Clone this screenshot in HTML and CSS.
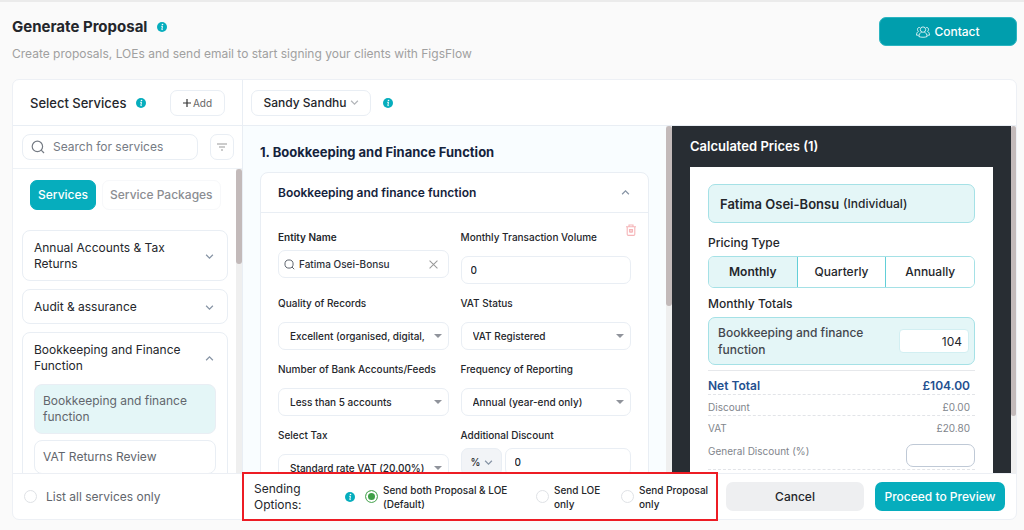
FILE: index.html
```html
<!DOCTYPE html>
<html lang="en">
<head>
    <meta charset="UTF-8">
    <meta name="viewport" content="width=device-width, initial-scale=1.0">
    <title>Generate Proposal</title>
    <link rel="stylesheet" href="styles.css">
</head>
<body>
    <!-- shared icons -->
    <svg class="sprite" aria-hidden="true">
        <symbol id="info" viewBox="0 0 10 10">
            <circle cx="5" cy="5" r="5" fill="#06adbd"/>
            <circle cx="5.5" cy="2.5" r="0.8" fill="#fff"/>
            <path d="M4.2 4.3h1.3L4.8 7.6h.9" fill="none" stroke="#fff" stroke-width="1"/>
        </symbol>
        <symbol id="down" viewBox="0 0 8 8">
            <path d="M1 2.5l3 3 3-3" fill="none" stroke="currentColor" stroke-width="1.1"/>
        </symbol>
        <symbol id="up" viewBox="0 0 8 8">
            <path d="M1 5.5l3-3 3 3" fill="none" stroke="currentColor" stroke-width="1.1"/>
        </symbol>
        <symbol id="search" viewBox="0 0 14 14">
            <circle cx="6.4" cy="6.4" r="5.2" fill="none" stroke="currentColor" stroke-width="1.2"/>
            <path d="M10.2 10.2l2.8 2.8" fill="none" stroke="currentColor" stroke-width="1.2"/>
        </symbol>
    </svg>

    <header class="page-header">
        <div>
            <h1>Generate Proposal <svg class="info"><use href="#info"/></svg></h1>
            <p>Create proposals, LOEs and send email to start signing your clients with FigsFlow</p>
        </div>
        <button class="btn btn-contact" type="button">
            <svg viewBox="0 0 14 12" fill="none" stroke="currentColor" stroke-width="0.8">
                <circle cx="7" cy="3.6" r="2.7"/>
                <path d="M3 10.9c-.3-2.6 1.2-4.3 2.6-4.7M11 10.9c.3-2.6-1.2-4.3-2.6-4.7M3 10.6c2 .9 6 .9 8 0"/>
                <path d="M3.8 1.5C2.2 1.2 1.3 2.4 1.5 3.7c.1.8.5 1.4 1 1.7C1.2 6 .5 7.2.5 9.2h2.2M10.2 1.5c1.6-.3 2.5.9 2.3 2.2-.1.8-.5 1.4-1 1.7 1.3.6 2 1.8 2 3.8h-2.2"/>
            </svg>
            Contact
        </button>
    </header>

    <main class="panel">
        <div class="panel-top">
            <div class="top-services">
                <h2>Select Services</h2>
                <svg class="info"><use href="#info"/></svg>
                <button class="btn-add" type="button">
                    <svg viewBox="0 0 8 8"><path d="M4 0v8M0 4h8" stroke="#333" stroke-width="1.2"/></svg>Add
                </button>
            </div>
            <div class="top-client">
                <button class="btn-client" type="button">Sandy Sandhu <svg class="chevron"><use href="#down"/></svg></button>
                <svg class="info"><use href="#info"/></svg>
            </div>
        </div>

        <div class="panel-body">
            <aside class="sidebar">
                <div class="search-row">
                    <label class="search">
                        <svg><use href="#search"/></svg>
                        <input type="text" placeholder="Search for services" aria-label="Search for services">
                    </label>
                    <button class="btn-filter" type="button" aria-label="Filter">
                        <svg viewBox="0 0 12 8"><path d="M1 1h10M3 4h6M5 7h2" stroke="#999" stroke-width="1.2"/></svg>
                    </button>
                </div>
                <div class="scroll-area">
                    <div class="service-list">
                        <div class="tabs">
                            <button class="tab active" type="button">Services</button>
                            <button class="tab" type="button">Service Packages</button>
                        </div>
                        <section class="service">
                            <button class="service-head" type="button">Annual Accounts &amp; Tax Returns <svg class="chevron"><use href="#down"/></svg></button>
                        </section>
                        <section class="service">
                            <button class="service-head" type="button">Audit &amp; assurance <svg class="chevron"><use href="#down"/></svg></button>
                        </section>
                        <section class="service">
                            <button class="service-head" type="button">Bookkeeping and Finance Function <svg class="chevron"><use href="#up"/></svg></button>
                            <div class="service-items">
                                <button class="service-item selected" type="button">Bookkeeping and finance function</button>
                                <button class="service-item" type="button">VAT Returns Review</button>
                            </div>
                        </section>
                    </div>
                    <div class="scrollbar"><div class="thumb thumb-services"></div></div>
                </div>
            </aside>

            <section class="details">
                <div class="details-content">
                    <h2>1. Bookkeeping and Finance Function</h2>
                    <div class="card">
                        <div class="card-head">
                            <h3>Bookkeeping and finance function</h3>
                            <svg class="chevron"><use href="#up"/></svg>
                        </div>
                        <form class="fields">
                            <button class="btn-delete" type="button" aria-label="Delete">
                                <svg viewBox="0 0 10 12" fill="none" stroke="#f5b5b8" stroke-width="1.1">
                                    <path d="M0 2.8h10M3 2.6V1h4v1.6M1.2 3v7.2q0 1.2 1.2 1.2h5.2q1.2 0 1.2-1.2V3M3.5 5.5h3v2.5h-3zM5 5.5v3.5"/>
                                </svg>
                            </button>
                            <div class="field tight strong">
                                <label for="entity">Entity Name</label>
                                <div class="control entity">
                                    <svg class="lens"><use href="#search"/></svg>
                                    <input id="entity" type="text" value="Fatima Osei-Bonsu">
                                    <svg class="clear" viewBox="0 0 8 8"><path d="M.5.5l7 7M7.5.5l-7 7" stroke="#999" stroke-width="0.9"/></svg>
                                </div>
                            </div>
                            <div class="field">
                                <label for="volume">Monthly Transaction Volume</label>
                                <input class="control" id="volume" type="text" value="0">
                            </div>
                            <div class="field">
                                <label for="quality">Quality of Records</label>
                                <div class="select"><select class="control" id="quality"><option>Excellent (organised, digital,</option></select></div>
                            </div>
                            <div class="field">
                                <label for="vat">VAT Status</label>
                                <div class="select"><select class="control" id="vat"><option>VAT Registered</option></select></div>
                            </div>
                            <div class="field">
                                <label for="accounts">Number of Bank Accounts/Feeds</label>
                                <div class="select"><select class="control" id="accounts"><option>Less than 5 accounts</option></select></div>
                            </div>
                            <div class="field">
                                <label for="frequency">Frequency of Reporting</label>
                                <div class="select"><select class="control" id="frequency"><option>Annual (year-end only)</option></select></div>
                            </div>
                            <div class="field">
                                <label for="tax">Select Tax</label>
                                <div class="select"><select class="control" id="tax"><option>Standard rate VAT (20.00%)</option></select></div>
                            </div>
                            <div class="field tight">
                                <label for="discount">Additional Discount</label>
                                <div class="discount">
                                    <button class="control unit" type="button">% <svg class="chevron"><use href="#down"/></svg></button>
                                    <input class="control" id="discount" type="text" value="0">
                                </div>
                            </div>
                        </form>
                    </div>
                </div>
                <div class="scrollbar"><div class="thumb thumb-details"></div></div>
            </section>

            <section class="prices">
                <div class="prices-content">
                    <h2>Calculated Prices (1)</h2>
                    <div class="price-card">
                        <div class="client-box">Fatima Osei-Bonsu <span>(Individual)</span></div>
                        <h3>Pricing Type</h3>
                        <div class="pricing-type">
                            <button class="active" type="button">Monthly</button>
                            <button type="button">Quarterly</button>
                            <button type="button">Annually</button>
                        </div>
                        <h3>Monthly Totals</h3>
                        <div class="total-box">
                            <label for="amount">Bookkeeping and finance function</label>
                            <input id="amount" type="text" value="104">
                        </div>
                        <div class="line net"><span>Net Total</span><span>£104.00</span></div>
                        <div class="line"><span>Discount</span><span>£0.00</span></div>
                        <div class="line plain"><span>VAT</span><span>£20.80</span></div>
                        <div class="line general">
                            <label for="general">General Discount (%)</label>
                            <input id="general" type="text">
                        </div>
                    </div>
                </div>
                <div class="scrollbar"><div class="thumb thumb-prices"></div></div>
            </section>
        </div>

        <footer class="panel-footer">
            <label class="list-all"><input type="radio" name="list"> List all services only</label>
            <div class="sending" role="radiogroup" aria-labelledby="sending-title">
                <span class="sending-title" id="sending-title">Sending Options:</span>
                <svg class="info"><use href="#info"/></svg>
                <label class="option option-both"><input type="radio" name="sending" checked> Send both Proposal &amp; LOE (Default)</label>
                <label class="option option-loe"><input type="radio" name="sending"> Send LOE only</label>
                <label class="option option-proposal"><input type="radio" name="sending"> Send Proposal only</label>
            </div>
            <div class="actions">
                <button class="btn btn-cancel" type="button">Cancel</button>
                <button class="btn btn-proceed" type="button">Proceed to Preview</button>
            </div>
        </footer>
    </main>
</body>
</html>
```
FILE: styles.css
```css
* {
    box-sizing: border-box;
}
body {
    margin: 0;
    height: 100vh;
    display: flex;
    flex-direction: column;
    padding: 0 7px 10px 12px;
    border-top: 2px solid #ebebeb;
    background-color: #fafafa;
    color: #24262b;
    font-family: Inter, "Noto Sans", sans-serif;
    font-size: 12px;
    line-height: 16px;
    overflow: hidden;
}
h1, h2, h3, p {
    margin: 0;
}
button, input, select {
    font: inherit;
    color: inherit;
    margin: 0;
}
button {
    cursor: pointer;
}
svg {
    flex: none;
}
.sprite {
    position: absolute;
    width: 0;
    height: 0;
}
.info {
    width: 10px;
    height: 10px;
}
.chevron {
    width: 9px;
    height: 9px;
    color: #8794a5;
}

/* header */
.page-header {
    display: flex;
    justify-content: space-between;
    align-items: flex-start;
    padding: 15px 0 17px;
}
.page-header h1 {
    display: flex;
    align-items: center;
    gap: 10px;
    font-size: 15px;
    line-height: 20px;
    font-weight: 700;
}
.page-header p {
    margin-top: 8px;
    font-size: 12px;
    line-height: 17px;
    color: #a0a0a0;
}
.btn {
    display: flex;
    align-items: center;
    justify-content: center;
    height: 29px;
    border: none;
    border-radius: 7px;
    font-weight: 500;
}
.btn-contact {
    gap: 4px;
    width: 138px;
    border: 1px solid #2bb5c1;
    background-color: #009ead;
    color: #fff;
}
.btn-contact svg {
    width: 14px;
    height: 12px;
}

/* panel */
.panel {
    flex: 1;
    min-height: 0;
    display: flex;
    flex-direction: column;
    border: 1px solid #edf0f5;
    border-radius: 7px;
    background-color: #fff;
}
.panel-top {
    display: flex;
    height: 46px;
    border-bottom: 1px solid #e9eef4;
}
.top-services {
    display: flex;
    align-items: center;
    width: 230px;
    padding: 0 17px;
    border-right: 1px solid #e9eef4;
}
.top-services h2 {
    margin-right: 9px;
    font-size: 13px;
    font-weight: 500;
}
.btn-add, .btn-client {
    display: flex;
    align-items: center;
    justify-content: center;
    height: 26px;
    border: 1px solid #e9eef4;
    border-radius: 7px;
    background-color: #fff;
}
.btn-add {
    gap: 2px;
    width: 55px;
    margin-left: auto;
    padding: 0;
    color: #666;
    font-size: 10px;
}
.btn-add svg {
    width: 8px;
    height: 8px;
}
.top-client {
    display: flex;
    align-items: center;
    gap: 12px;
    padding-left: 8px;
}
.btn-client {
    gap: 3px;
    width: 120px;
    padding: 0;
    font-weight: 500;
}
.btn-client .chevron {
    color: #b3b6ba;
}
.panel-body {
    flex: 1;
    min-height: 0;
    display: flex;
    overflow: hidden;
}
.scrollbar {
    flex: none;
    width: 6px;
    background-color: #efefef;
}
.thumb {
    border-radius: 3px;
    background-color: #c3baba;
}
.thumb-services {
    height: 95px;
}
.thumb-details {
    height: 180px;
}
.thumb-prices {
    height: 290px;
}

/* services */
.sidebar {
    display: flex;
    flex-direction: column;
    width: 230px;
    border-right: 1px solid #e9eef4;
}
.search-row {
    display: flex;
    gap: 12px;
    padding: 8px 8px 8px 9px;
    border-bottom: 1px solid #eef2f6;
}
.search {
    flex: 1;
    min-width: 0;
    display: flex;
    align-items: center;
    gap: 8px;
    height: 26px;
    padding: 0 8px;
    border: 1px solid #e9eef4;
    border-radius: 8px;
    color: #757b84;
}
.search svg {
    width: 14px;
    height: 14px;
}
.search input {
    flex: 1;
    min-width: 0;
    padding: 0;
    border: none;
    outline: none;
    background: none;
}
.search input::placeholder {
    color: #757b84;
    opacity: 1;
}
.btn-filter {
    display: flex;
    align-items: center;
    justify-content: center;
    width: 24px;
    height: 26px;
    padding: 0;
    border: 1px solid #e9eef4;
    border-radius: 7px;
    background-color: #fff;
}
.btn-filter svg {
    width: 12px;
    height: 8px;
}
.scroll-area {
    flex: 1;
    min-height: 0;
    display: flex;
    overflow: hidden;
}
.service-list {
    flex: 1;
    min-width: 0;
    padding: 11px 8px 0 9px;
}
.tabs {
    display: flex;
    gap: 6px;
    margin: 0 8px 20px;
}
.tab {
    flex: none;
    height: 30px;
    padding: 0 7px;
    border: 1px solid #f7f8fa;
    border-radius: 7px;
    background-color: #fff;
    color: #8b8d92;
    font-weight: 500;
    white-space: nowrap;
}
.tab.active {
    border-color: #06adbd;
    background-color: #06adbd;
    color: #fff;
}
.service {
    margin-bottom: 8px;
    padding: 0 11px;
    border: 1px solid #e9eef4;
    border-radius: 8px;
}
.service-head {
    display: flex;
    align-items: center;
    justify-content: space-between;
    gap: 20px;
    width: 100%;
    padding: 9px 2px 8px 0;
    border: none;
    background: none;
    text-align: left;
}
.service-items {
    padding-top: 2px;
}
.service-item {
    display: block;
    width: 100%;
    margin-bottom: 6px;
    padding: 8px;
    border: 1px solid #e9eef4;
    border-radius: 8px;
    background-color: #fff;
    color: #62666d;
    text-align: left;
}
.service-item.selected {
    background-color: #e4f6f7;
}

/* service details */
.details {
    flex: 1;
    min-width: 0;
    display: flex;
    overflow: hidden;
    background-color: #f9fdff;
}
.details-content {
    flex: 1;
    min-width: 0;
    padding: 16px 17px 0;
}
.details h2 {
    margin-bottom: 10px;
    color: #15233c;
    font-size: 13px;
    line-height: 20px;
    font-weight: 700;
}
.card {
    border: 1px solid #e9eef4;
    border-radius: 8px;
    background-color: #fff;
}
.card-head {
    display: flex;
    align-items: center;
    justify-content: space-between;
    height: 40px;
    padding: 0 18px 0 17px;
    border-bottom: 1px solid #e9eef4;
}
.card-head h3 {
    color: #15233c;
    font-size: 12px;
    font-weight: 600;
}
.fields {
    position: relative;
    display: grid;
    grid-template-columns: 1fr 1fr;
    gap: 11px 12px;
    padding: 16px 17px;
    font-size: 10px;
    font-weight: 500;
}
.btn-delete {
    position: absolute;
    top: 11px;
    right: 12px;
    width: 10px;
    height: 12px;
    padding: 0;
    border: none;
    background: none;
}
.btn-delete svg {
    display: block;
    width: 10px;
    height: 12px;
}
.field {
    display: flex;
    flex-direction: column;
    gap: 11px;
    min-width: 0;
}
.field.tight {
    gap: 5px;
}
.field label {
    white-space: nowrap;
}
.field.strong label {
    font-weight: 600;
}
.control {
    width: 100%;
    height: 28px;
    padding: 0 9px;
    border: 1px solid #e9eef4;
    border-radius: 7px;
    background-color: #fff;
}
.entity {
    display: flex;
    align-items: center;
    gap: 4px;
    padding: 0 10px 0 5px;
    color: #555b66;
}
.entity input {
    flex: 1;
    min-width: 0;
    padding: 0;
    border: none;
    outline: none;
    background: none;
    color: #2c3038;
}
.lens {
    width: 11px;
    height: 11px;
}
.clear {
    width: 9px;
    height: 9px;
}
.select {
    position: relative;
}
.select::after {
    content: "";
    position: absolute;
    top: 12px;
    right: 7px;
    border: 4px solid transparent;
    border-top: 4px solid #90939b;
    border-bottom: none;
}
.select select {
    display: block;
    appearance: none;
    padding: 0 16px 0 11px;
}
.discount {
    display: flex;
    gap: 3px;
}
.unit {
    display: flex;
    align-items: center;
    gap: 4px;
    flex: none;
    width: 41px;
    background-color: #f2f4f7;
}

/* prices */
.prices {
    display: flex;
    width: 344px;
    overflow: hidden;
    background-color: #282d33;
}
.prices .scrollbar {
    width: 5px;
}
.prices-content {
    flex: 1;
    min-width: 0;
    padding: 10px 18px 0;
}
.prices h2 {
    margin-bottom: 11px;
    color: #fff;
    font-size: 13px;
    line-height: 20px;
    font-weight: 600;
}
.price-card {
    padding: 17px 18px 40px;
    background-color: #fff;
}
.client-box {
    display: flex;
    align-items: center;
    gap: 4px;
    height: 39px;
    margin-bottom: 12px;
    padding: 0 11px;
    border: 1px solid #a5e1e6;
    border-radius: 7px;
    background-color: #e4f6f7;
    font-size: 13px;
    font-weight: 600;
}
.client-box span {
    font-size: 12px;
    font-weight: 500;
}
.price-card h3 {
    margin-bottom: 5px;
    font-size: 12px;
    font-weight: 500;
}
.pricing-type {
    display: flex;
    height: 32px;
    margin-bottom: 8px;
    border: 1px solid #a5e1e6;
    border-radius: 6px;
    overflow: hidden;
}
.pricing-type button {
    flex: 1;
    padding: 0;
    border: none;
    border-left: 1px solid #62cfd8;
    background-color: #fff;
    font-weight: 500;
}
.pricing-type button.active {
    border-left: none;
    background-color: #e4f6f7;
    font-weight: 600;
}
.total-box {
    display: flex;
    align-items: center;
    justify-content: space-between;
    gap: 30px;
    height: 48px;
    margin-bottom: 5px;
    padding: 0 5px 0 9px;
    border: 1px solid #a5e1e6;
    border-radius: 7px;
    background-color: #e4f6f7;
    color: #43474e;
    font-weight: 500;
    line-height: 17px;
}
.total-box input {
    width: 70px;
    height: 24px;
    padding: 0 6px;
    border: 1px solid #d2eff2;
    border-radius: 4px;
    background-color: #fff;
    color: #24262b;
    font-weight: 400;
    text-align: right;
}
.line {
    display: flex;
    justify-content: space-between;
    padding: 5px 5px 0 0;
    border-bottom: 1px dashed #e2e4e8;
    color: #81858c;
    font-size: 10px;
    line-height: 15px;
}
.line.net {
    padding-top: 7px;
    border-top: 1px solid #e6e8eb;
    color: #24508f;
    font-size: 12px;
    line-height: 16px;
    font-weight: 600;
}
.line.plain {
    border-bottom: none;
}
.line.general {
    padding: 8px 0 2px;
}
.line.general input {
    width: 69px;
    height: 23px;
    border: 1px solid #bfc9d6;
    border-radius: 7px;
    background-color: #fff;
}

/* footer */
.panel-footer {
    display: flex;
    height: 46px;
    border-top: 1px solid #eceff4;
}
.list-all {
    display: flex;
    align-items: center;
    gap: 9px;
    width: 229px;
    padding-left: 11px;
    color: #62666d;
}
input[type="radio"] {
    flex: none;
    appearance: none;
    width: 13px;
    height: 13px;
    border: 1px solid #dfe2e6;
    border-radius: 50%;
    background-color: #fff;
}
input[type="radio"]:checked {
    border-color: #5faf66;
    background-color: #3f9f47;
    box-shadow: inset 0 0 0 2px #fff;
}
.sending {
    z-index: 1;
    flex: 1;
    min-width: 0;
    display: flex;
    align-items: center;
    margin: -2px 0;
    padding-left: 10px;
    border: 2px solid #ed1c24;
    background-color: #fff;
    font-size: 10px;
    font-weight: 500;
    line-height: 14px;
}
.sending-title {
    width: 91px;
    padding-right: 30px;
    font-size: 12px;
    font-weight: 400;
    line-height: 16px;
}
.sending .info {
    margin-right: 10px;
}
.option {
    display: flex;
    align-items: center;
    gap: 5px;
}
.option-both {
    width: 171px;
}
.option-loe {
    width: 85px;
}
.option-proposal {
    flex: 1;
}
.actions {
    display: flex;
    align-items: center;
    gap: 11px;
    padding: 0 11px 0 8px;
}
.btn-cancel {
    width: 138px;
    background-color: #eeeff1;
}
.btn-proceed {
    width: 130px;
    padding: 0;
    background-color: #06adbd;
    color: #fff;
}
```
